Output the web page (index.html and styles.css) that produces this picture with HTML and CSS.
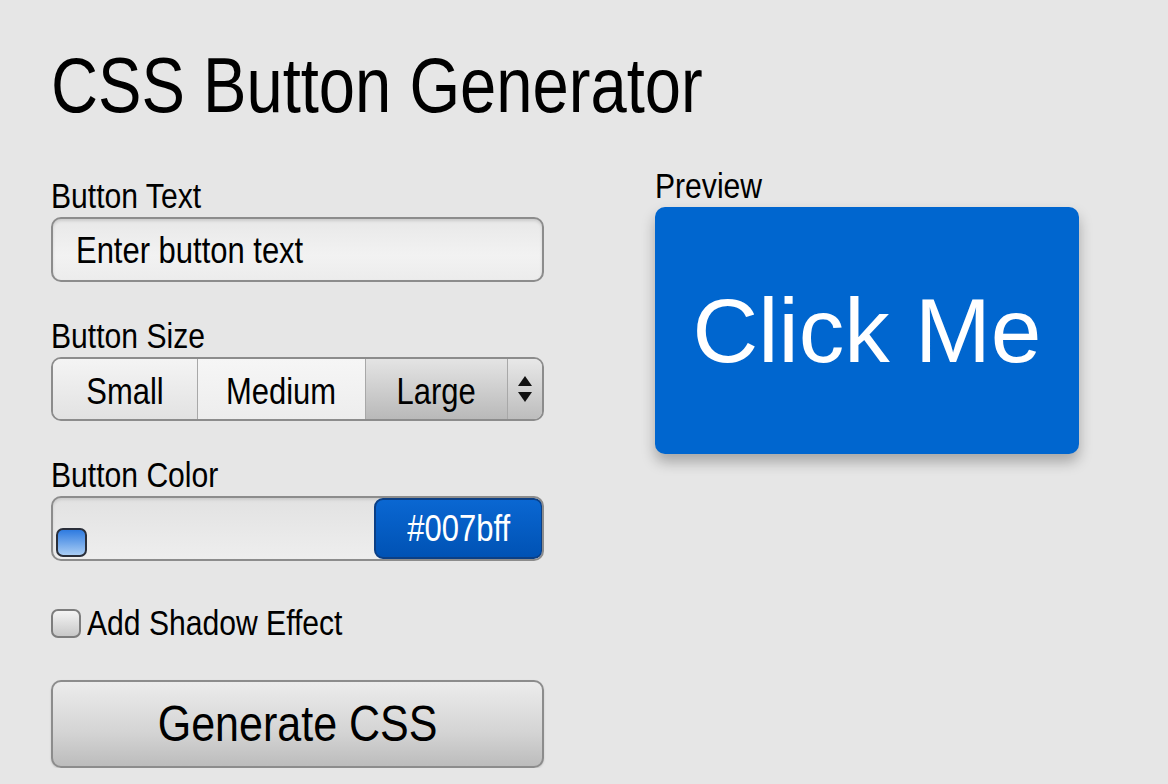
FILE: index.html
```html
<!DOCTYPE html>
<html>
<head>
  <meta charset="UTF-8" />
  <title>CSS Button Generator</title>
  <meta name="viewport" content="width=device-width, initial-scale=1" />
  <link rel="stylesheet" href="styles.css">
</head>
<body>
  <div class="page">
    <h1><span class="nar title-text">CSS Button Generator</span></h1>

    <div class="layout">
      <div class="controls">
        <label><span class="nar">Button Text</span></label>
        <div class="text-field"><span class="nar">Enter button text</span></div>

        <label class="gap-top"><span class="nar">Button Size</span></label>
        <div class="segmented">
          <div class="seg seg-small"><span class="nar mid">Small</span></div>
          <div class="seg seg-medium"><span class="nar mid">Medium</span></div>
          <div class="seg seg-large active"><span class="nar mid">Large</span></div>
          <div class="seg seg-spin">
            <span class="arrow-up"></span>
            <span class="arrow-down"></span>
          </div>
        </div>

        <label class="gap-top"><span class="nar">Button Color</span></label>
        <div class="color-field">
          <div class="swatch-wrap"><span class="swatch"></span></div>
          <div class="hex-value"><span class="nar mid">#007bff</span></div>
        </div>

        <div class="check-row">
          <span class="checkbox"></span>
          <span class="nar check-label">Add Shadow Effect</span>
        </div>

        <button class="generate"><span class="nar mid">Generate CSS</span></button>
      </div>

      <div class="preview">
        <div class="preview-label"><span class="nar">Preview</span></div>
        <div class="preview-btn">Click Me</div>
      </div>
    </div>
  </div>
</body>
</html>
```

FILE: styles.css
```css
body {
  margin: 0;
  background-color: #e6e6e6;
  font-family: "Liberation Sans", Arial, sans-serif;
  color: #000;
}
.page {
  padding: 46px 0 0 51px;
}
/* no narrow face installed, so squeeze the regular one */
.nar {
  display: inline-block;
  white-space: nowrap;
  transform: scaleX(0.86);
  transform-origin: left center;
}
.nar.mid {
  transform-origin: center center;
}
h1 {
  margin: 0;
  font-size: 78px;
  font-weight: normal;
  line-height: 1;
  height: 78px;
}
.title-text {
  transform: scaleX(0.835);
  margin-top: -2px;
}
.layout {
  display: flex;
  align-items: flex-start;
  margin-top: 51px;
}
.controls {
  width: 493px;
  display: flex;
  flex-direction: column;
}
label, .preview-label {
  display: block;
  font-size: 35px;
  line-height: 42px;
}
.gap-top {
  margin-top: 33px;
}
.text-field {
  box-sizing: border-box;
  height: 65px;
  width: 100%;
  display: flex;
  align-items: center;
  border: 2px solid #8c8c8c;
  border-radius: 10px;
  background: linear-gradient(#e8e8e8, #f2f2f2 60%, #ececec);
  box-shadow: inset 0 2px 3px rgba(0,0,0,0.12);
  padding: 3px 0 0 23px;
  font-size: 36px;
}
.segmented {
  display: flex;
  height: 64px;
  box-sizing: border-box;
  border: 2px solid #8c8c8c;
  border-radius: 10px;
  overflow: hidden;
}
.seg {
  display: flex;
  align-items: center;
  justify-content: center;
  padding-top: 5px;
  font-size: 36px;
  border-right: 1px solid #a8a8a8;
}
.seg-small {
  width: 144px;
  background: linear-gradient(#f4f4f4, #e2e2e2);
}
.seg-medium {
  width: 167px;
  background: linear-gradient(#f6f6f6, #ededed);
}
.seg-large {
  width: 141px;
  background: linear-gradient(#e4e4e4, #b9b9b9);
}
.seg-spin {
  flex: 1;
  flex-direction: column;
  gap: 6px;
  padding-top: 0;
  border-right: none;
  background: linear-gradient(#e8e8e8, #bdbdbd);
}
.arrow-up, .arrow-down {
  width: 0;
  height: 0;
  border-left: 7px solid transparent;
  border-right: 7px solid transparent;
}
.arrow-up {
  border-bottom: 10px solid #111;
}
.arrow-down {
  border-top: 10px solid #111;
}
.color-field {
  display: flex;
  height: 65px;
  box-sizing: border-box;
  border: 2px solid #8c8c8c;
  border-radius: 10px;
  background: linear-gradient(#e2e2e2, #eeeeee);
  box-shadow: inset 0 2px 3px rgba(0,0,0,0.1);
  overflow: hidden;
}
.swatch-wrap {
  flex: 1;
  display: flex;
  align-items: flex-end;
  padding: 0 0 2px 3px;
}
.swatch {
  display: block;
  width: 31px;
  height: 29px;
  box-sizing: border-box;
  border: 2px solid #2a2f3a;
  border-radius: 7px;
  background: linear-gradient(#2f7be0, #a9cdf4);
}
.hex-value {
  width: 169px;
  box-sizing: border-box;
  margin: 0 -1px 0 0;
  display: flex;
  align-items: center;
  justify-content: center;
  color: #fff;
  font-size: 36px;
  border: 2px solid #0b3f85;
  border-radius: 9px;
  background: linear-gradient(#0a67d2, #0052b4);
}
.check-row {
  display: flex;
  align-items: center;
  margin-top: 41px;
  height: 42px;
}
.checkbox {
  width: 30px;
  height: 29px;
  box-sizing: border-box;
  border: 2px solid #7d7d7d;
  border-radius: 7px;
  background: linear-gradient(#f4f4f4, #c8c8c8);
  margin: 0 6px 0 0;
}
.check-label {
  font-size: 35px;
}
.generate {
  margin-top: 36px;
  height: 88px;
  width: 100%;
  border: 2px solid #8c8c8c;
  border-radius: 10px;
  background: linear-gradient(#ececec, #d4d4d4 60%, #bcbcbc);
  box-shadow: 0 1px 2px rgba(0,0,0,0.15);
  font-family: inherit;
  font-size: 50px;
  color: #000;
  cursor: pointer;
}
.preview {
  margin: -10px 0 0 111px;
}
.preview-btn {
  width: 424px;
  height: 247px;
  display: flex;
  align-items: center;
  justify-content: center;
  background: #0066cf;
  border-radius: 10px;
  box-shadow: 0 8px 14px rgba(0,0,0,0.28);
  color: #fff;
  font-size: 91px;
}
```
